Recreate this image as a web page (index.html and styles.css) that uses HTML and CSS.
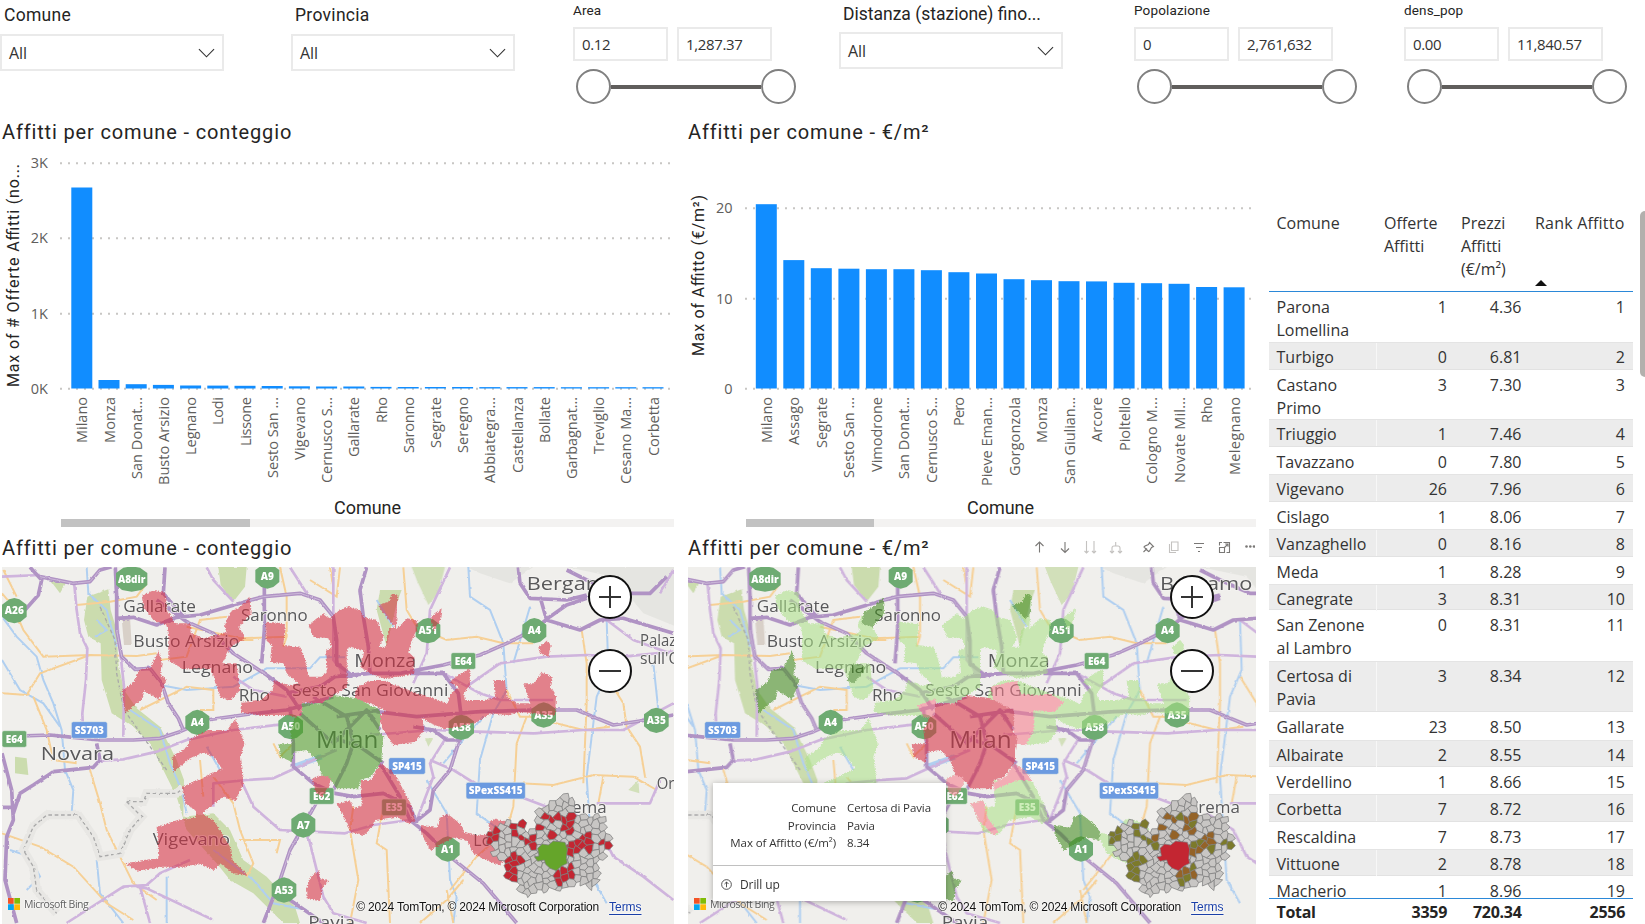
FILE: index.html
```html
<!DOCTYPE html>
<html lang="it">
<head>
<meta charset="utf-8">
<title>Affitti per comune</title>
<link rel="stylesheet" href="styles.css">
</head>
<body>
<svg class="defs" width="0" height="0" aria-hidden="true">
  <defs>
    <filter id="ragged" x="-5%" y="-5%" width="110%" height="110%" color-interpolation-filters="sRGB">
      <feTurbulence type="turbulence" baseFrequency="0.22" numOctaves="2" seed="4" result="n"/>
      <feDisplacementMap in="SourceGraphic" in2="n" scale="5" xChannelSelector="R" yChannelSelector="G"/>
    </filter>
    <filter id="wobble" x="-5%" y="-5%" width="110%" height="110%" color-interpolation-filters="sRGB">
      <feTurbulence type="fractalNoise" baseFrequency="0.06" numOctaves="2" seed="9" result="n"/>
      <feDisplacementMap in="SourceGraphic" in2="n" scale="7" xChannelSelector="R" yChannelSelector="G"/>
      <feGaussianBlur stdDeviation="0.35"/>
    </filter>
    <g id="base">
      <rect x="-20" y="90" width="2080" height="1110" fill="#f0efec"/>
      <g filter="url(#wobble)">
        <g fill="#cbdcae">
          <path d="M262 200 325 178 332 240 350 300 355 400 372 480 410 535 480 590 530 690 552 750 550 860 640 850 690 900 730 990 800 1040 885 1130 900 1179 850 1179 760 1090 690 1050 650 1000 560 900 530 800 490 720 450 640 400 590 335 550 305 450 302 340 265 320 252 270Z"/>
          <path d="M655 111 740 111 735 170 700 215 662 165Z"/>
          <path d="M1235 111 1335 111 1315 190 1285 225 1250 150Z" opacity=".8"/>
          <path d="M45 680 80 685 85 735 45 730ZM150 150 200 155 180 190ZM1140 180 1205 180 1190 220 1160 350 1130 240Z"/>
          <path d="M1885 780 1915 750 1918 790ZM1275 625 1300 625 1285 650Z" opacity=".8"/>
        </g>
        <path d="M1400 111 1600 111 1530 160 1440 130ZM1700 111 2030 111 2030 290 1930 250 1840 140Z" fill="#e5e5e1"/>
        <path d="M365 265 390 262 395 345 372 345Z" fill="#d8d0c8"/>
        <g fill="none" stroke="#b0cff0" stroke-width="6">
          <path d="M6 260 50 320 110 380 130 450 160 520 185 600 195 720 220 780 215 850M6 390 60 480 130 520 180 590M260 112 265 190 320 240 350 350M290 270 320 300 285 320M480 465 560 480 700 470 800 415 930 415 960 382 1035 382M390 540 480 600 510 700 545 780 560 850M30 960 90 980 120 1040 80 1080M290 990 300 1090 370 1179M500 1040 500 1179M640 960 760 1050 820 1120 920 1140M1405 111 1410 200 1470 240 1510 340 1520 480 1480 550 1440 690 1430 850 1500 900M1590 230 1540 400M1820 270 1825 420 1790 500 1760 740 1780 1050 1820 1120M1960 400 1975 540M1280 750 1340 850 1350 1050 1370 1100 1360 1179M1130 210 1180 290M620 650 660 720M1450 560 1380 640 1330 700"/>
          <path d="M880 710 965 680" stroke-width="16"/>
        </g>
        <g fill="none" stroke="#f6d096" stroke-width="6">
          <path d="M6 190 40 230 70 300 130 380 270 375 410 378 470 370M6 490 80 495 120 430 270 375M100 500 140 600 160 690 230 700M10 120 50 200M230 225 330 215 410 200 440 160M840 112 860 200 860 320 850 350M480 390 560 380 600 270 680 260M860 320 720 325 560 290M1020 112 1010 200 930 150M1210 112 1220 240 1250 290 1340 330 1430 320 1510 340 1600 340M1520 480 1560 560 1590 560 1750 600 1830 590M1580 560 1550 640 1540 830 1520 900 1430 980 1350 1080M1340 1080 1360 1179M1745 300 1760 400 1760 520 1750 760M1820 440 1870 520 1880 590 1920 650 1935 740M1560 760 1660 765 1780 735 1900 740 1970 780M1810 740 1795 820M640 740 700 820 720 900 760 1000 740 1040M720 930 840 930 830 970M6 910 120 950 220 1010 320 1120 400 1170M270 720 300 820 320 900 360 980 400 1060 470 1110M600 540 640 540 640 480 560 470 420 540M1060 830 1050 900 1075 1050 1050 1179M1150 830 1130 940 1160 960 1170 1179M1260 1179 1340 1110 1390 1050M990 112 1000 170M600 690 610 800M880 640 840 680 820 640M700 330 760 330"/>
        </g>
        <path d="M380 815 430 815 440 790 530 790 550 775M380 815 425 860 390 900 360 970 300 980 280 920 235 855 140 855 100 890 70 960 100 1010 110 1080 170 1150" fill="none" stroke="#e8e7e4" stroke-width="26"/>
        <path d="M380 815 430 815 440 790 530 790 550 775M380 815 425 860 390 900 360 970 300 980 280 920 235 855 140 855 100 890 70 960 100 1010 110 1080 170 1150M300 230 345 330 350 430 372 540 500 720" fill="none" stroke="#a9a9a9" stroke-width="4" stroke-dasharray="11 8"/>
        <g fill="none" stroke-linejoin="round">
          <g stroke="#cfb4dd" stroke-width="8">
            <path d="M6 140 120 135M223 165 230 240 240 310 262 355 258 450 247 550 250 620M370 620 372 470 350 265M300 692 370 688 470 665 560 630 700 600 870 580M410 1070 440 1075 640 1170M200 1179 370 1070 440 1065 480 1030 570 990M420 1070 450 1179M640 830 640 760 740 750 820 745 940 690 1010 660M725 755 760 830 840 900 1035 910 1120 885 1230 870M920 900 940 980 970 1100 1000 1150 1100 1179M620 112 640 150 700 215M870 112 920 190M1350 112 1290 240 1280 370 1240 460M1500 400 1640 380 1760 375 1870 380 2020 365M1110 615 1300 600 1430 605 1600 610 1750 600 1870 600 2020 520M1560 800 1640 830M1790 820 1860 820 1950 820 1980 750M1250 870 1300 740 1290 700 1340 620M1290 690 1360 720 1440 770 1560 800M1840 980 1930 1040 2020 1110M1820 270 1900 330 2010 370M1010 390 1030 440 1110 430M700 440 760 480 860 500M1400 470 1500 400M1330 430 1440 490 1500 510 1660 510M1720 850 1800 900 1840 980M1000 112 1000 390 1040 440M1980 190 2020 120"/>
          </g>
          <g stroke="#b093c4" stroke-width="11">
            <path d="M120 140 220 160 270 155 300 120 335 110M90 112 125 150 115 195 75 240M346 112 350 200 350 300 365 380 405 418 450 415 485 460 505 520 535 565 550 600M495 112 490 190 550 260M350 265 400 262 470 285 530 262 600 255 735 215 790 200 900 190 960 210 1000 260 1010 330 1010 400 1060 440M470 210 560 275 640 310 700 370 800 435 860 480 900 540M793 112 793 300 785 400M6 620 150 615 220 622 300 630 400 630 480 625 540 605 620 570 750 552 860 540 1000 500M160 725 280 712 300 690 290 640M6 670 35 780 40 870 20 920 15 1050 50 1179M160 725 100 765 60 790 40 850M6 832 40 832M870 530 880 640 880 710 940 760 1005 790 1060 800 1150 790 1230 830 1250 880M970 780 920 870 870 960 840 1050 790 1179M860 490 960 470 1005 440 1110 430 1200 430 1330 405 1440 375 1520 340 1600 300 1650 260 1700 225 1760 205M1100 112 1080 180 1090 260 1105 350 1110 430M1555 112 1560 160 1590 205 1700 210 1760 195M1620 200 1640 270 1740 300 1800 270 1870 265 2020 310M1700 120 1760 150 1850 190 1950 190 2000 140M1230 430 1330 430 1375 490 1385 570 1375 640 1350 720 1300 780 1290 840 1240 880M1130 545 1250 560 1440 545 1600 540 1730 540 1840 585 1940 570 2020 555M1140 700 1200 800 1230 870 1280 910 1350 980 1450 1060 1550 1179M870 1110 970 1179M1240 590 1300 600 1340 630 1385 630M940 500 1040 560 1060 640 1040 700 1000 780M1010 560 1140 540M990 620 1080 650 1150 700M900 550 1000 640 1100 540 1140 600"/>
          </g>
          <path d="M120 140 220 160 270 155 300 120M350 300 365 380 405 418 450 415 485 460 505 520 535 565 550 600M735 215 790 200 900 190 960 210 1000 260M560 275 640 310 700 370 800 435M6 620 150 615M300 630 400 630 480 625 540 605 620 570 750 552M970 780 920 870 870 960 840 1050M1600 300 1520 340 1440 375 1330 405M1650 540 1730 540 1840 585 1940 570M1375 640 1350 720 1300 780M1350 980 1450 1060 1550 1179" stroke="#cdb9da" stroke-width="3"/>
        </g>
      </g>
      <g class="places">
        <text x="370" y="247" textLength="218" lengthAdjust="spacingAndGlyphs">Gallarate</text>
        <text x="723" y="273" textLength="200" lengthAdjust="spacingAndGlyphs">Saronno</text>
        <text x="400" y="350" textLength="318" lengthAdjust="spacingAndGlyphs">Busto Arsizio</text>
        <text x="545" y="428" textLength="214" lengthAdjust="spacingAndGlyphs">Legnano</text>
        <text x="716" y="514" textLength="94" lengthAdjust="spacingAndGlyphs">Rho</text>
        <text x="876" y="498" textLength="469" lengthAdjust="spacingAndGlyphs">Sesto San Giovanni</text>
        <text x="458" y="945" textLength="232" lengthAdjust="spacingAndGlyphs">Vigevano</text>
        <text x="1920" y="347" textLength="195" lengthAdjust="spacingAndGlyphs">Palazzolo</text>
        <text x="1920" y="403" textLength="200" lengthAdjust="spacingAndGlyphs">sull'Oglio</text>
        <text x="1663" y="849" textLength="157" lengthAdjust="spacingAndGlyphs">Crema</text>
        <text x="1420" y="949" textLength="95" lengthAdjust="spacingAndGlyphs">Lodi</text>
        <text x="1970" y="776" textLength="200" lengthAdjust="spacingAndGlyphs">Orzinuovi</text>
        <text x="925" y="1194" textLength="140" lengthAdjust="spacingAndGlyphs">Pavia</text>
        <text class="mid" x="1063" y="411" textLength="186" lengthAdjust="spacingAndGlyphs">Monza</text>
        <text class="mid" x="1580" y="181" textLength="277" lengthAdjust="spacingAndGlyphs">Bergamo</text>
        <text class="big" x="948" y="655" textLength="187" lengthAdjust="spacingAndGlyphs">Milan</text>
      </g>
      <g id="shields"></g>
    </g>
  </defs>
</svg>

<main class="report">
  <header class="slicers">
    <section class="slicer"><h3>Comune</h3><div class="select">All<svg viewBox="0 0 18 10"><path d="M1 1 9 9 17 1"/></svg></div></section>
    <section class="slicer"><h3>Provincia</h3><div class="select">All<svg viewBox="0 0 18 10"><path d="M1 1 9 9 17 1"/></svg></div></section>
    <section class="slicer range"><h4>Area</h4><div class="inputs"><span>0.12</span><span>1,287.37</span></div><div class="slider"><i></i><b></b><i></i></div></section>
    <section class="slicer raised"><h3>Distanza (stazione) fino...</h3><div class="select">All<svg viewBox="0 0 18 10"><path d="M1 1 9 9 17 1"/></svg></div></section>
    <section class="slicer range"><h4>Popolazione</h4><div class="inputs"><span>0</span><span>2,761,632</span></div><div class="slider"><i></i><b></b><i></i></div></section>
    <section class="slicer range"><h4>dens_pop</h4><div class="inputs"><span>0.00</span><span>11,840.57</span></div><div class="slider"><i></i><b></b><i></i></div></section>
  </header>

  <div class="body">
    <div class="visuals">
      <section class="visual chart">
        <h2>Affitti per comune - conteggio</h2>
        <svg id="chart-count" width="674" height="373" viewBox="0 146 674 373"></svg>
        <div class="scroll scroll-count"><i></i></div>
      </section>
      <section class="visual chart">
        <h2>Affitti per comune - €/m²</h2>
        <svg id="chart-price" width="568" height="373" viewBox="688 146 568 373"></svg>
        <div class="scroll scroll-price"><i></i></div>
      </section>

      <section class="visual map-visual">
        <h2>Affitti per comune - conteggio</h2>
        <div class="map map-left">
          <svg class="tiles" viewBox="6 111 2016 1071">
            <use href="#base"/>
            <g class="places"><text class="mid" x="122" y="689" textLength="220" lengthAdjust="spacingAndGlyphs">Novara</text></g>
            <g id="regions-count" class="regions" filter="url(#ragged)"></g>
            <g id="inset-count" class="inset"></g>
          </svg>
          <div class="zoomer"><button><svg viewBox="0 0 22 22"><path d="M0 11H22M11 0V22"/></svg></button><button><svg viewBox="0 0 22 22"><path d="M0 11H22"/></svg></button></div>
          <div class="bing"><svg viewBox="0 0 12 12"><path fill="#f35325" d="M0 0h5.7v5.7H0z"/><path fill="#81bc06" d="M6.3 0H12v5.7H6.3z"/><path fill="#05a6f0" d="M0 6.3h5.7V12H0z"/><path fill="#ffba08" d="M6.3 6.3H12V12H6.3z"/></svg>Microsoft Bing</div>
          <div class="credit">© 2024 TomTom, © 2024 Microsoft Corporation<a>Terms</a></div>
        </div>
      </section>
      <section class="visual map-visual">
        <div class="title-row">
          <h2>Affitti per comune - €/m²</h2>
          <svg class="tools" width="222" height="16" viewBox="1033 539 222 16">
            <g class="dark">
              <path d="M1039.500 552.500v-10M1035.500 546l4-4 4 4"/>
              <path d="M1065 542v10.500M1061 548.500l4 4 4-4"/>
              <path d="m1143.500 552 3.500-3.500M1149.500 542.500l4 4-2 1-2 3.500-1 .5-4.500-4.500 1-1 3.500-1.500z"/>
              <path d="M1194 543.500h10M1196 547.500h6M1198 551.500h2"/>
              <path d="M1222 542.500h-2.500v3M1219.500 547.500h5v5h-5zM1226.500 552.500h3v-10h-6M1224.500 547.500l3.500-3.500M1225.200 544h2.800v2.800"/>
            </g>
            <g class="light">
              <path d="M1086.500 541v12M1084.500 551l2 2 2-2M1094 541v12M1092 551l2 2 2-2"/>
              <path d="M1115.700 542v4M1112 553v-5q0-2 2-2h4q2 0 2 2v5M1110 551l2 2 2-2M1118 551l2 2 2-2"/>
              <path d="M1171.500 542h6.500v8.500h-6.500zM1169.500 544v8.500h6.500"/>
            </g>
            <g fill="#7a7876"><circle cx="1246.500" cy="546.500" r="1.300"/><circle cx="1250.300" cy="546.500" r="1.300"/><circle cx="1254" cy="546.500" r="1.300"/></g>
          </svg>
        </div>
        <div class="map map-right">
          <svg class="tiles" viewBox="164 111 1704 1071">
            <use href="#base"/>
            <g id="regions-price" class="regions" filter="url(#ragged)"></g>
            <g id="inset-price" class="inset"></g>
          </svg>
          <div class="zoomer"><button><svg viewBox="0 0 22 22"><path d="M0 11H22M11 0V22"/></svg></button><button><svg viewBox="0 0 22 22"><path d="M0 11H22"/></svg></button></div>
          <div class="bing"><svg viewBox="0 0 12 12"><path fill="#f35325" d="M0 0h5.7v5.7H0z"/><path fill="#81bc06" d="M6.3 0H12v5.7H6.3z"/><path fill="#05a6f0" d="M0 6.3h5.7V12H0z"/><path fill="#ffba08" d="M6.3 6.3H12V12H6.3z"/></svg>Microsoft Bing</div>
          <div class="credit">© 2024 TomTom, © 2024 Microsoft Corporation<a>Terms</a></div>
          <div class="tooltip">
            <dl><dt>Comune</dt><dd>Certosa di Pavia</dd><dt>Provincia</dt><dd>Pavia</dd><dt>Max of Affitto (€/m²)</dt><dd>8.34</dd></dl>
            <div class="drill"><svg viewBox="0 0 12 12"><circle cx="6" cy="6" r="5.300"/><path d="M6 9V3.300M3.800 5.500 6 3.300 8.200 5.500"/></svg>Drill up</div>
          </div>
        </div>
      </section>
    </div>

    <aside class="table">
      <div class="row head"><span>Comune</span><span>Offerte Affitti</span><span>Prezzi Affitti (€/m²)</span><span>Rank Affitto<i class="sort"></i></span></div>
      <div class="rows" id="rows"></div>
      <div class="row total"><span>Total</span><span>3359</span><span>720.34</span><span>2556</span></div>
    </aside>
    <div class="page-scroll"></div>
  </div>
</main>
<script src="app.js"></script>
</body>
</html>
```
FILE: styles.css
```css
* { box-sizing: border-box; }
body { margin: 0; width: 1645px; height: 924px; overflow: hidden; background: #fff; color: #252423; font-family: "Open Sans", "Noto Sans", sans-serif; }
h2, h3, h4, dl, dd { margin: 0; font-weight: 400; }
h2, h3, h4 { font-family: Roboto, sans-serif; white-space: nowrap; }
.defs { position: absolute; }
.report { display: flex; flex-direction: column; height: 924px; }

/* slicers */
.slicers { display: grid; grid-template-columns: 291px 282px 266px 295px 270px 241px; height: 118px; }
.slicer h3 { height: 34px; padding: 5px 0 0 4px; font-size: 17.500px; line-height: 20px; letter-spacing: .3px; }
.raised h3 { height: 32px; padding-top: 4px; letter-spacing: 0; }
.select { width: 224px; height: 37px; border: 2px solid #eaeaea; padding: 0 7px; display: flex; align-items: center; justify-content: space-between; font-size: 16px; letter-spacing: -.1px; color: #333; }
.select svg { width: 17px; height: 10px; fill: none; stroke: #333; stroke-width: 1.200; }
.slicer h4 { height: 27px; padding-top: 2px; font-size: 13.500px; line-height: 17px; letter-spacing: .15px; }
.inputs { display: flex; gap: 9px; }
.inputs span { width: 95px; height: 34px; border: 2px solid #eaeaea; padding-left: 7px; font-size: 15px; line-height: 30px; letter-spacing: -.35px; color: #333; }
.slider { display: flex; align-items: center; width: 225px; padding: 8px 0 0 3px; }
.slider i { width: 35px; height: 35px; border: 2px solid #808080; border-radius: 50%; background: #fff; }
.slider b { width: 150px; height: 4px; background: #605e5c; }

/* report body */
.body { display: flex; height: 806px; }
.visuals { display: grid; grid-template-columns: 688px 568px; grid-template-rows: 412px 394px; width: 1269px; }
.visual { display: flex; flex-direction: column; }
.visual h2 { height: 28px; padding-left: 2px; font-size: 20px; line-height: 29px; letter-spacing: .85px; }
.visual:nth-child(even) h2 { padding-left: 0; }
.map-visual h2 { height: 37px; line-height: 37px; }
.chart svg { display: block; flex: none; }
.chart text { font-size: 14.500px; fill: #605e5c; }
.chart .axis-title { font-family: Roboto, sans-serif; font-size: 18px; fill: #252423; }
.chart .side { font-size: 16px; }
.chart line { stroke: #c8c6c4; stroke-width: 2; stroke-dasharray: 2 6; }
.chart rect { fill: #118dff; }
.scroll { height: 8px; background: #f3f2f1; }
.scroll i { display: block; height: 8px; background: #c2c2c2; }
.scroll-count { width: 613px; margin-left: 61px; }
.scroll-count i { width: 189px; }
.scroll-price { width: 510px; margin-left: 58px; }
.scroll-price i { width: 128px; }

/* maps */
.title-row { display: flex; justify-content: space-between; }
.tools { margin: 9px 1px 0 0; fill: none; }
.tools .dark { stroke: #7a7876; stroke-width: 1.100; }
.tools .light { stroke: #c4c2c0; stroke-width: 1.100; }
.map { position: relative; height: 357px; overflow: hidden; }
.map-left { width: 672px; margin-left: 2px; }
.map-right { width: 568px; }
.tiles { display: block; width: 100%; height: 357px; }
.places { font-family: "Open Sans", sans-serif; font-size: 49px; fill: #58585a; stroke: #f4f3f1; stroke-width: 5px; paint-order: stroke; }
.places .mid { font-size: 57px; }
.places .big { font-size: 70px; }
.shield { font: 800 30px "Open Sans", sans-serif; fill: #fff; text-anchor: middle; }
.regions { opacity: .57; }
.zoomer { position: absolute; right: 42.500px; top: 8px; display: flex; flex-direction: column; gap: 29.500px; }
.zoomer button { width: 44px; height: 44px; padding: 0; border: 2px solid #111; border-radius: 50%; background: #fff; display: grid; place-items: center; }
.zoomer svg { width: 22px; height: 22px; stroke: #333; stroke-width: 2; }
.bing { position: absolute; left: 6px; top: 331px; display: flex; align-items: center; gap: 4px; height: 12px; font-size: 10.500px; letter-spacing: -.45px; color: #606060; text-shadow: 0 0 2px #fff, 0 0 2px #fff; white-space: nowrap; }
.bing svg { width: 12px; height: 12px; }
.credit { position: absolute; right: 32.500px; top: 332px; font: 12px/17px "Liberation Sans", Arial, sans-serif; letter-spacing: -.19px; color: #111; white-space: nowrap; text-shadow: 0 0 2px #fff, 0 0 2px #fff; }
.credit a { margin-left: 10px; color: #1a3fa8; text-decoration: underline; text-underline-offset: 3px; letter-spacing: -.05px; }
.tooltip { position: absolute; left: 25px; top: 216px; width: 233px; height: 118px; background: #fff; box-shadow: 0 1px 6px rgba(0,0,0,.3); font-size: 11.500px; color: #333; }
.tooltip dl { display: grid; grid-template-columns: 123px 1fr; column-gap: 11px; height: 83px; padding-top: 16px; grid-auto-rows: 17.500px; line-height: 17px; border-bottom: 1px solid #c0c0c0; letter-spacing: -.1px; white-space: nowrap; }
.tooltip dt { text-align: right; }
.drill { display: flex; align-items: center; gap: 8px; height: 36px; padding-left: 8px; font-size: 12px; letter-spacing: -.1px; }
.drill svg { width: 11px; height: 11px; fill: none; stroke: #333; stroke-width: .9; }

/* table */
.table { width: 364px; margin-top: 94px; font-size: 16px; line-height: 23px; color: #333; }
.row { display: grid; grid-template-columns: 108px 78px 74px 104px; }
.row span { padding: 3px 8px 0 0; text-align: right; }
.row span:first-child { padding-left: 7.500px; padding-right: 0; text-align: left; }
.row span:nth-child(3) { padding-right: 7.500px; }
.head { height: 80px; border-bottom: 1.500px solid #2b88d8; }
.head span { padding: 0 0 0 7px; text-align: left; position: relative; }
.row.head span:nth-child(3) { padding-left: 6px; }
.row.head span:nth-child(4) { padding-left: 6px; padding-right: 0; white-space: nowrap; letter-spacing: .2px; }
.sort { position: absolute; left: 6px; bottom: 5px; border: 6px solid transparent; border-top: 0; border-bottom: 6px solid #111; }
.rows { height: 606px; overflow: hidden; }
.rows .row { border-top: 1px solid transparent; }
.rows .row:nth-child(even) { background: #ececec; border-top-color: #e4e4e4; border-bottom: 1px solid #e2e2e2; }
.rows .row:nth-child(even) span:first-child { border-right: 1px solid #f7f7f7; }
.total { border-top: 1.500px solid #2b88d8; font-weight: 700; color: #252423; letter-spacing: -.3px; }
.row.total span { padding-top: 0; line-height: 26px; }
.page-scroll { width: 5px; height: 166px; margin: 93px 0 0 7px; border-radius: 5px 0 0 5px; background: #b3b0ad; }
```
FILE: app.js
```js
const $ = id => document.getElementById(id);

/* column charts */
const countData = [["Milano", 201], ["Monza", 8.5], ["San Donat...", 4.3], ["Busto Arsizio", 3.6], ["Legnano", 3], ["Lodi", 2.9], ["Lissone", 2.7], ["Sesto San ...", 2.5], ["Vigevano", 2.2], ["Cernusco S...", 2], ["Gallarate", 2], ["Rho", 1.6], ["Saronno", 1.5], ["Segrate", 1.5], ["Seregno", 1.5], ["Abbiategra...", 1.4], ["Castellanza", 1.4], ["Bollate", 1.4], ["Garbagnat...", 1.3], ["Treviglio", 1.3], ["Cesano Ma...", 1.3], ["Corbetta", 1.3]];
const priceData = [["Milano", 184.3], ["Assago", 128.4], ["Segrate", 120.3], ["Sesto San ...", 119.8], ["Vimodrone", 119.3], ["San Donat...", 119.3], ["Cernusco S...", 118.3], ["Pero", 116.3], ["Pieve Eman...", 115], ["Gorgonzola", 109.3], ["Monza", 108.3], ["San Giulian...", 107.3], ["Arcore", 107.1], ["Pioltello", 105.7], ["Cologno M...", 105.3], ["Novate Mil...", 104.7], ["Rho", 101.5], ["Melegnano", 101.2]];
const labelLength = { "Milano": 46, "Monza": 46, "San Donat...": 82, "Busto Arsizio": 88, "Legnano": 58, "Lodi": 28, "Lissone": 49, "Sesto San ...": 81, "Vigevano": 63, "Cernusco S...": 86, "Gallarate": 60, "Rho": 26, "Saronno": 56, "Segrate": 51, "Seregno": 56, "Abbiategra...": 86, "Castellanza": 76, "Bollate": 46, "Garbagnat...": 82, "Treviglio": 57, "Cesano Ma...": 87, "Corbetta": 59, "Assago": 48, "Vimodrone": 75, "Pero": 29, "Pieve Eman...": 89, "Gorgonzola": 79, "San Giulian...": 87, "Arcore": 45, "Pioltello": 54, "Cologno M...": 87, "Novate Mil...": 86, "Melegnano": 78 };
function chart(id, data, o) {
  let s = "";
  o.ticks.forEach(([t, y]) => {
    s += `<line x1="${o.left}" x2="${o.right}" y1="${y}" y2="${y}"/><text x="${o.tickX}" y="${y + 5}" text-anchor="end">${t}</text>`;
  });
  data.forEach(([name, h], i) => {
    const x = o.first + i * o.step;
    s += `<rect x="${x.toFixed(1)}" y="${388.5 - h}" width="21" height="${h}"/>`;
    s += `<text transform="translate(${(x + 16).toFixed(1)} 397) rotate(-90)" text-anchor="end" textLength="${labelLength[name]}">${name}</text>`;
  });
  s += `<text class="axis-title" x="${o.cx}" y="514" text-anchor="middle" textLength="67">Comune</text>`;
  s += `<text class="axis-title side" transform="translate(${o.sideX} ${o.sideY}) rotate(-90)" textLength="${o.sideLen}">${o.side}</text>`;
  $(id).innerHTML = s;
}
chart("chart-count", countData, { ticks: [["3K", 163.3], ["2K", 238.3], ["1K", 313.7], ["0K", 388.7]], left: 60, right: 671, tickX: 48, first: 71.3, step: 27.2, cx: 367.5, side: "Max of # Offerte Affitti (no...", sideX: 18.5, sideY: 387, sideLen: 223 });
chart("chart-price", priceData, { ticks: [["20", 208.3], ["10", 298.7], ["0", 388.7]], left: 745, right: 1253, tickX: 732.5, first: 755.8, step: 27.52, cx: 1000.5, side: "Max of Affitto (€/m²)", sideX: 704, sideY: 356, sideLen: 161 });

/* table */
const rows = [["Parona Lomellina", 1, "4.36", 50], ["Turbigo", 0, "6.81", 28], ["Castano Primo", 3, "7.30", 49], ["Triuggio", 1, "7.46", 28], ["Tavazzano", 0, "7.80", 27], ["Vigevano", 26, "7.96", 28], ["Cislago", 1, "8.06", 27], ["Vanzaghello", 0, "8.16", 28], ["Meda", 1, "8.28", 27], ["Canegrate", 3, "8.31", 26], ["San Zenone al Lambro", 0, "8.31", 51], ["Certosa di Pavia", 3, "8.34", 51], ["Gallarate", 23, "8.50", 28], ["Albairate", 2, "8.55", 27], ["Verdellino", 1, "8.66", 27], ["Corbetta", 7, "8.72", 28], ["Rescaldina", 7, "8.73", 27], ["Vittuone", 2, "8.78", 27], ["Macherio", 1, "8.96", 27]];
$("rows").innerHTML = rows.map((r, i) => `<div class="row" style="height:${r[3]}px"><span>${r[0]}</span><span>${r[1]}</span><span>${r[2]}</span><span>${i + 1}</span></div>`).join("");

/* road shields */
const shields = [["A8dir", 395, 147, 94, "o"], ["A9", 802, 138, 72, "o"], ["A26", 43, 242, 74, "o"], ["A4", 592, 577, 72, "o"], ["E64", 43, 627, 74, "g"], ["SS703", 268, 600, 108, "b"], ["A50", 872, 590, 74, "o"], ["E62", 965, 798, 74, "g"], ["A7", 910, 885, 72, "o"], ["A53", 852, 1080, 74, "o"], ["A51", 1284, 302, 74, "o"], ["A4", 1603, 302, 72, "o"], ["E64", 1390, 393, 74, "g"], ["A58", 1384, 592, 76, "o"], ["A35", 1631, 555, 74, "o"], ["A35", 1969, 571, 74, "o"], ["SP415", 1221, 708, 110, "b"], ["SPexSS415", 1487, 782, 178, "b"], ["E35", 1182, 832, 74, "g"], ["A1", 1343, 957, 72, "o"]];
$("shields").innerHTML = shields.map(([t, x, y, w, k]) => {
  const a = w / 2, h = 38;
  const shape = k === "o"
    ? `<path fill="#6eab72" d="M${x - a + 22} ${y - h + 4}L${x} ${y - h}L${x + a - 22} ${y - h + 4}L${x + a} ${y - 18}V${y + 18}L${x + a - 18} ${y + h - 5}L${x} ${y + h}L${x - a + 18} ${y + h - 5}L${x - a} ${y + 18}V${y - 18}Z"/>`
    : `<rect x="${x - a}" y="${y - 25}" width="${w}" height="50" rx="6" fill="${k === "b" ? "#6b9ae0" : "#6eab72"}" stroke="#e6ece6" stroke-width="2"/>`;
  return `${shape}<text class="shield" x="${x}" y="${y + 11}">${t}</text>`;
}).join("");

/* municipality areas */
const A = {
  busto: "425,195 460,180 495,185 498,235 525,280 570,280 572,308 610,325 680,305 672,285 690,245 725,225 748,200 752,250 715,290 735,325 690,350 665,400 710,400 715,450 718,480 690,510 660,500 640,440 630,415 545,415 505,390 505,320 500,285 460,270 430,230",
  turbigo: "475,360 485,400 480,435 497,445 485,485 475,508 430,480 425,505 375,548 365,480 400,455 415,420 450,410",
  rho: "795,275 855,280 850,345 900,350 915,390 925,440 960,440 980,425 975,360 1000,350 1040,350 1040,470 990,500 965,520 905,515 905,565 860,555 780,555 720,545 725,515 780,510 815,480 820,450 865,465 895,460 860,430 850,400 810,395 815,345 797,330",
  monza: "925,285 970,250 990,265 1015,240 1045,228 1080,240 1090,260 1130,270 1150,320 1135,350 1155,350 1165,295 1185,290 1150,250 1133,225 1165,215 1175,190 1192,195 1190,250 1188,295 1220,265 1250,270 1250,300 1235,330 1225,365 1240,380 1240,430 1190,440 1150,445 1110,430 1080,410 1090,360 1050,350 1000,370 985,325 940,320",
  east: "1070,470 1110,450 1150,450 1250,490 1290,500 1340,520 1350,490 1375,470 1345,455 1380,430 1408,415 1410,465 1390,490 1395,510 1450,510 1485,500 1480,450 1515,450 1520,500 1550,520 1590,520 1570,460 1600,460 1625,425 1655,440 1650,470 1668,500 1665,555 1600,550 1550,545 1520,555 1470,550 1430,575 1370,590 1330,595 1290,580 1265,560 1270,600 1245,635 1180,645 1150,600 1135,560 1155,540 1110,520 1060,510",
  osio: "1615,350 1640,330 1652,345 1645,380 1620,370",
  vimercate: "1290,260 1325,235 1320,270 1300,300",
  vigevano: "705,565 718,600 733,640 720,680 730,760 705,810 670,800 640,820 605,850 640,870 690,950 695,990 745,1035 700,1030 660,1000 640,1020 600,1000 550,1010 480,1010 410,1022 375,1000 430,990 475,985 470,890 530,870 585,860 585,840 555,820 545,770 610,740 665,715 640,680 610,665 560,690 520,725 515,680 560,650 570,625 620,600 680,600",
  certosa: "955,1020 960,1045 985,1050 965,1075 960,1110 920,1105 918,1075 930,1040",
  assago: "935,745 970,732 995,740 985,770 965,800 945,785",
  sandonato: "1140,700 1175,720 1205,770 1230,820 1245,870 1225,880 1190,860 1125,870 1115,890 1090,915 1050,905 1035,870 1010,820 1050,810 1060,835 1085,825 1080,750 1110,750",
  lodi: "1260,885 1310,890 1320,860 1340,850 1380,880 1390,905 1430,915 1470,910 1465,880 1480,865 1540,880 1550,920 1500,1005 1470,995 1420,970 1400,930 1360,920 1290,960 1265,915",
  milan: "905,520 960,520 1000,495 1070,505 1140,540 1140,580 1135,600 1150,620 1145,660 1145,690 1110,740 1080,750 1075,775 1010,775 985,740 965,735 950,690 920,660 880,665 875,695 840,680 835,640 875,640 870,600 885,560 905,555"
};
const poly = (points, fill) => `<polygon points="${points}" fill="${fill}"/>`;
const others = Object.keys(A).filter(k => k !== "milan");
$("regions-count").innerHTML = others.map(k => poly(A[k], "#d62f42")).join("") + poly(A.milan, "#4c9c26");
const dark = "#3f8a1c", pink = "#f47c8c";
$("regions-price").innerHTML = others.map(k => poly(A[k], k === "turbigo" || k === "certosa" ? dark : "#abe288")).join("")
  + poly("725,225 748,200 752,250 715,290 684,280 690,245", dark)
  + poly("640,450 655,400 700,410 660,460", dark)
  + poly("1133,225 1165,215 1175,190 1192,195 1190,250 1175,265", dark)
  + poly("1260,885 1310,890 1320,860 1340,850 1380,880 1400,905 1395,930 1360,920 1290,960 1265,915", dark)
  + poly("1070,470 1150,450 1160,490 1210,495 1250,490 1290,515 1260,545 1200,540 1200,600 1175,645 1145,640 1130,540 1080,510", pink)
  + poly("1115,740 1140,700 1175,720 1195,750 1150,750 1100,770 1080,780 1080,755", pink)
  + poly("1010,820 1050,810 1060,860 1095,905 1080,915 1035,870", pink)
  + poly("850,525 905,505 910,565 870,560", pink)
  + poly(A.assago, pink)
  + poly(A.milan, "#d62f42");

/* overview inset: irregular cell mesh clipped to the area outline */
const outline = [[448, 915], [500, 888], [555, 866], [566, 900], [602, 900], [600, 840], [640, 832], [690, 800], [712, 820], [722, 850], [790, 850], [812, 880], [824, 940], [802, 980], [792, 1030], [776, 1078], [742, 1070], [705, 1055], [660, 1085], [600, 1078], [575, 1102], [540, 1062], [510, 1030], [500, 990], [468, 955]];
const core = [[608, 955], [622, 942], [640, 945], [655, 933], [690, 937], [697, 958], [694, 985], [697, 1000], [680, 1008], [664, 1022], [645, 1015], [632, 1003], [628, 990], [608, 994], [598, 980], [612, 978]];
const hot = [[470, 920, 18], [490, 903, 12], [548, 884, 16], [548, 916, 15], [518, 988, 16], [546, 985, 18], [530, 1028, 25], [590, 935, 17], [640, 865, 16], [672, 865, 16], [700, 890, 23], [645, 910, 14], [615, 900, 10], [710, 950, 25], [742, 940, 17], [768, 925, 12], [808, 940, 14], [770, 952, 13], [702, 1030, 25], [668, 1048, 16], [738, 1065, 12], [712, 862, 13]];
const inside = (p, g) => {
  let c = false;
  for (let i = 0, j = g.length - 1; i < g.length; j = i++)
    if ((g[i][1] > p[1]) !== (g[j][1] > p[1]) && p[0] < (g[j][0] - g[i][0]) * (p[1] - g[i][1]) / (g[j][1] - g[i][1]) + g[i][0]) c = !c;
  return c;
};
const jitter = (x, y, k) => { const v = Math.sin(Math.round(x) * 12.9898 + Math.round(y) * 78.233 + k) * 43758.5453; return (v - Math.floor(v) - 0.5) * 11; };
function inset(id, dx, palette) {
  const R = 12.5, H = R * Math.sqrt(3);
  let s = "";
  for (let c = 0; c < 22; c++) for (let r = 0; r < 16; r++) {
    const x = 445 + c * R * 1.5, y = 795 + r * H + (c % 2) * H / 2;
    if (!inside([x, y], outline)) continue;
    const pts = [];
    for (let k = 0; k < 6; k++) {
      const px = x + R * Math.cos(k * Math.PI / 3), py = y + R * Math.sin(k * Math.PI / 3);
      pts.push(`${(px + jitter(px, py, 1)).toFixed(1)},${(py + jitter(px, py, 2)).toFixed(1)}`);
    }
    const isHot = hot.some(h => Math.hypot(x - h[0], y - h[1]) < h[2]);
    const near = Math.hypot(x - 675, y - 955) < 105 && x > 580;
    s += poly(pts.join(" "), isHot ? (near && (c + r) % 3 ? palette[1] : palette[0]) : "#c8c6c4");
  }
  s += `<polygon points="${core.map(p => p.join(",")).join(" ")}" fill="${palette[2]}"/>`;
  $(id).innerHTML = `<g transform="translate(${1005 + dx} 0)" stroke="#7d7d7d" stroke-width="2.200">${s}</g>`;
}
inset("inset-count", 0, ["#c32632", "#c32632", "#65a52a"]);
inset("inset-price", -33, ["#7c7a2b", "#946328", "#c32632"]);
```
